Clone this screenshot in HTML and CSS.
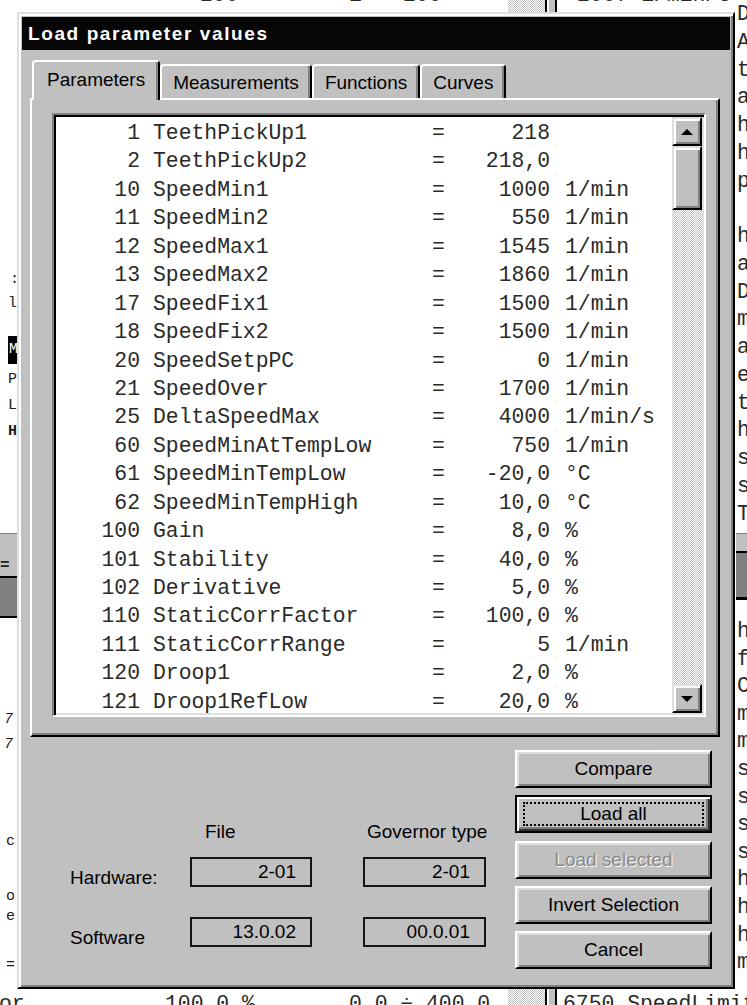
FILE: index.html
```html
<!DOCTYPE html>
<html lang="en">
<head>
<meta charset="utf-8">
<title>Load parameter values</title>
<link rel="stylesheet" href="styles.css">
</head>
<body>
<div class="desk">
  <!-- listing window underneath the dialog -->
  <div class="listing">
    <div class="bg-scroll"></div>
    <div class="bg-split"></div>
    <div class="frag top-a">200</div>
    <div class="frag top-b">1</div>
    <div class="frag top-c">200</div>
    <div class="frag top-d">2007 1/min/s</div>

    <div class="col col-right-upper">
      <div>D</div><div>A</div><div>t</div><div>a</div><div>h</div><div>h</div><div>p</div><div>&nbsp;</div>
      <div>h</div><div>a</div><div>D</div><div>m</div><div>a</div><div>e</div><div>t</div><div>h</div>
      <div>s</div><div>s</div><div>T</div>
    </div>
    <div class="hbar hbar-right"></div>
    <div class="col col-right-lower">
      <div>h</div><div>f</div><div>C</div><div>m</div><div>m</div><div>s</div><div>s</div><div>s</div>
      <div>s</div><div>h</div><div>h</div><div>h</div><div>m</div>
    </div>

    <div class="tiny t1">:</div>
    <div class="tiny t2">ll</div>
    <div class="tiny t3 inv">M</div>
    <div class="tiny t4">P</div>
    <div class="tiny t5">L</div>
    <div class="tiny t6">H</div>
    <div class="hbar hbar-left"><span>=</span></div>
    <div class="tiny t7">7</div>
    <div class="tiny t8">7</div>
    <div class="tiny t9">c</div>
    <div class="tiny t10">o</div>
    <div class="tiny t11">e</div>
    <div class="tiny t12">=</div>

    <div class="frag bot-a">or</div>
    <div class="frag bot-b">100,0 %</div>
    <div class="frag bot-c">0,0 ÷ 400,0</div>
    <div class="frag bot-d">6750 SpeedLimit</div>
  </div>

  <!-- dialog window -->
  <div class="dialog">
    <div class="titlebar">Load parameter values</div>
    <div class="dlg-body">
      <div class="tabs">
        <div class="tab active">Parameters</div>
        <div class="tab">Measurements</div>
        <div class="tab">Functions</div>
        <div class="tab">Curves</div>
      </div>
      <div class="panel">
        <div class="listbox">
          <div class="rows">
            <div class="row"><span class="num">1</span><span class="name">TeethPickUp1</span><span class="eq">=</span><span class="val">218</span><span class="unit"></span></div>
            <div class="row"><span class="num">2</span><span class="name">TeethPickUp2</span><span class="eq">=</span><span class="val">218,0</span><span class="unit"></span></div>
            <div class="row"><span class="num">10</span><span class="name">SpeedMin1</span><span class="eq">=</span><span class="val">1000</span><span class="unit">1/min</span></div>
            <div class="row"><span class="num">11</span><span class="name">SpeedMin2</span><span class="eq">=</span><span class="val">550</span><span class="unit">1/min</span></div>
            <div class="row"><span class="num">12</span><span class="name">SpeedMax1</span><span class="eq">=</span><span class="val">1545</span><span class="unit">1/min</span></div>
            <div class="row"><span class="num">13</span><span class="name">SpeedMax2</span><span class="eq">=</span><span class="val">1860</span><span class="unit">1/min</span></div>
            <div class="row"><span class="num">17</span><span class="name">SpeedFix1</span><span class="eq">=</span><span class="val">1500</span><span class="unit">1/min</span></div>
            <div class="row"><span class="num">18</span><span class="name">SpeedFix2</span><span class="eq">=</span><span class="val">1500</span><span class="unit">1/min</span></div>
            <div class="row"><span class="num">20</span><span class="name">SpeedSetpPC</span><span class="eq">=</span><span class="val">0</span><span class="unit">1/min</span></div>
            <div class="row"><span class="num">21</span><span class="name">SpeedOver</span><span class="eq">=</span><span class="val">1700</span><span class="unit">1/min</span></div>
            <div class="row"><span class="num">25</span><span class="name">DeltaSpeedMax</span><span class="eq">=</span><span class="val">4000</span><span class="unit">1/min/s</span></div>
            <div class="row"><span class="num">60</span><span class="name">SpeedMinAtTempLow</span><span class="eq">=</span><span class="val">750</span><span class="unit">1/min</span></div>
            <div class="row"><span class="num">61</span><span class="name">SpeedMinTempLow</span><span class="eq">=</span><span class="val">-20,0</span><span class="unit">°C</span></div>
            <div class="row"><span class="num">62</span><span class="name">SpeedMinTempHigh</span><span class="eq">=</span><span class="val">10,0</span><span class="unit">°C</span></div>
            <div class="row"><span class="num">100</span><span class="name">Gain</span><span class="eq">=</span><span class="val">8,0</span><span class="unit">%</span></div>
            <div class="row"><span class="num">101</span><span class="name">Stability</span><span class="eq">=</span><span class="val">40,0</span><span class="unit">%</span></div>
            <div class="row"><span class="num">102</span><span class="name">Derivative</span><span class="eq">=</span><span class="val">5,0</span><span class="unit">%</span></div>
            <div class="row"><span class="num">110</span><span class="name">StaticCorrFactor</span><span class="eq">=</span><span class="val">100,0</span><span class="unit">%</span></div>
            <div class="row"><span class="num">111</span><span class="name">StaticCorrRange</span><span class="eq">=</span><span class="val">5</span><span class="unit">1/min</span></div>
            <div class="row"><span class="num">120</span><span class="name">Droop1</span><span class="eq">=</span><span class="val">2,0</span><span class="unit">%</span></div>
            <div class="row"><span class="num">121</span><span class="name">Droop1RefLow</span><span class="eq">=</span><span class="val">20,0</span><span class="unit">%</span></div>
          </div>
          <div class="vscroll">
            <div class="sb-btn"><span class="arrow-up"></span></div>
            <div class="thumb"></div>
            <div class="track"></div>
            <div class="sb-btn"><span class="arrow-down"></span></div>
          </div>
        </div>
      </div>
      <div class="footer">
        <div class="info">
          <div class="info-head">
            <span class="lbl"></span>
            <span class="head head-file">File</span>
            <span class="head head-gov">Governor type</span>
          </div>
          <div class="info-row">
            <span class="lbl">Hardware:</span>
            <span class="field">2-01</span>
            <span class="field">2-01</span>
          </div>
          <div class="info-row second">
            <span class="lbl">Software</span>
            <span class="field">13.0.02</span>
            <span class="field">00.0.01</span>
          </div>
        </div>
        <div class="buttons">
          <div class="btn">Compare</div>
          <div class="btn default"><span class="focus">Load all</span></div>
          <div class="btn disabled">Load selected</div>
          <div class="btn">Invert Selection</div>
          <div class="btn">Cancel</div>
        </div>
      </div>
    </div>
  </div>
</div>
</body>
</html>
```
FILE: styles.css
```css
* { box-sizing: border-box; }

html, body {
  margin: 0;
  padding: 0;
}

body {
  background: #fff;
  font-family: "Liberation Sans", Arial, sans-serif;
  color: #000;
}

.desk {
  position: relative;
  width: 747px;
  height: 1005px;
  overflow: hidden;
  background: #fff;
}

/* ---------- listing window in the background ---------- */
.listing {
  position: absolute;
  inset: 0;
  font-family: "Liberation Mono", "Courier New", monospace;
  font-size: 21.4px;
  color: #2a2a2a;
}

.frag {
  position: absolute;
  white-space: pre;
  line-height: 28px;
}

.top-a { left: 200px; top: -19px; }
.top-b { left: 349px; top: -19px; }
.top-c { left: 403px; top: -19px; }
.top-d { left: 577px; top: -19px; }

.bot-a { left: -1px; top: 990px; }
.bot-b { left: 165px; top: 990px; }
.bot-c { left: 349px; top: 990px; }
.bot-d { left: 563px; top: 990px; }

.bg-scroll {
  position: absolute;
  left: 508px;
  top: 0;
  width: 37px;
  height: 1005px;
  background: repeating-conic-gradient(#fff 0 25%, #c0c0c0 0 50%) 0 0 / 2px 2px;
}

.bg-split {
  position: absolute;
  left: 545px;
  top: 0;
  width: 12px;
  height: 1005px;
  background: #c0c0c0;
  border-left: 2px solid #000;
  border-right: 2px solid #000;
  box-shadow: inset 2px 0 #fff;
}

.col {
  position: absolute;
  display: flex;
  flex-direction: column;
  white-space: nowrap;
}

.col-right-upper { left: 737px; top: 1px; line-height: 27.75px; }
.col-right-lower { left: 737px; top: 618px; line-height: 27.6px; }

.hbar {
  position: absolute;
  background: #c0c0c0;
}

.hbar-right {
  left: 736px;
  top: 533px;
  width: 11px;
  height: 67px;
  border-top: 1px solid #808080;
  border-bottom: 3px solid #000;
  box-shadow: inset 0 -44px #808080, inset 0 -46px #000;
}

.hbar-left {
  left: 0;
  top: 533px;
  width: 17px;
  height: 85px;
  border-top: 1px solid #808080;
  border-bottom: 2px solid #000;
  box-shadow: inset 0 -38px #808080, inset 0 -40px #000;
  font-size: 16px;
  line-height: 16px;
}

.hbar-left span {
  display: block;
  padding: 24px 0 0 0;
  font-weight: bold;
  color: #202020;
}

.tiny {
  position: absolute;
  font-size: 15px;
  line-height: 16px;
  color: #202020;
}

.tiny.inv {
  background: #000;
  color: #fff;
  padding: 0 1px;
}

.t1 { left: 10px; top: 272px; }
.t2 { left: 8px; top: 296px; }
.t3 { left: 8px; top: 336px; height: 28px; line-height: 28px; }
.t4 { left: 8px; top: 372px; }
.t5 { left: 8px; top: 398px; }
.t6 { left: 8px; top: 424px; font-weight: bold; }
.t7 { left: 4px; top: 712px; font-style: italic; }
.t8 { left: 4px; top: 737px; font-style: italic; }
.t9 { left: 6px; top: 834px; }
.t10 { left: 6px; top: 889px; }
.t11 { left: 6px; top: 909px; }
.t12 { left: 6px; top: 958px; }

/* ---------- dialog window ---------- */
.dialog {
  position: absolute;
  left: 17px;
  top: 12px;
  width: 718px;
  height: 977px;
  background: #c0c0c0;
  border: 2px solid;
  border-color: #dfdfdf #000 #000 #dfdfdf;
  box-shadow: inset 2px 2px #fff, inset -2px -2px #808080;
  padding: 3px;
  display: flex;
  flex-direction: column;
}

.titlebar {
  height: 33px;
  flex: none;
  background: #060606;
  color: #fff;
  font-weight: bold;
  font-size: 19px;
  letter-spacing: 1.6px;
  padding-left: 6px;
  display: flex;
  align-items: center;
}

.dlg-body {
  flex: 1;
  display: flex;
  flex-direction: column;
}

/* tab strip */
.tabs {
  height: 48px;
  flex: none;
  display: flex;
  align-items: flex-end;
  margin-left: 10px;
  position: relative;
  z-index: 1;
}

.tab {
  height: 34px;
  padding: 5px 11px 0;
  border: 2px solid;
  border-color: #fff #000 transparent #fff;
  border-bottom: none;
  border-radius: 4px 4px 0 0;
  box-shadow: inset -2px 0 #808080;
  background: #c0c0c0;
  font-size: 19px;
  line-height: 24px;
  white-space: nowrap;
}

.tab.active {
  height: 40px;
  margin-bottom: -2px;
  padding: 6px 13px 0;
}

/* tab page */
.panel {
  height: 639px;
  flex: none;
  margin-left: 8px;
  margin-right: 10px;
  border: 2px solid;
  border-color: #fff #000 #000 #fff;
  box-shadow: inset -2px -2px #808080;
  padding: 13px 12px 18px 20px;
}

.listbox {
  height: 100%;
  display: flex;
  background: #fff;
  border: 2px solid;
  border-color: #808080 #fff #fff #808080;
  box-shadow: inset 2px 2px #000, inset -2px -2px #dfdfdf;
  padding: 2px;
}

.rows {
  flex: 1;
  overflow: hidden;
  padding-top: 2px;
  font-family: "Liberation Mono", "Courier New", monospace;
  font-size: 21.4px;
  line-height: 28.45px;
  color: #2a2a2a;
}

.row {
  display: grid;
  grid-template-columns: 84px 292px 13px 105px auto;
  height: 28.45px;
  white-space: nowrap;
}

.num { text-align: right; }
.name { padding-left: 13px; }
.eq { text-align: center; }
.val { text-align: right; }
.unit { padding-left: 15px; }

/* vertical scroll bar */
.vscroll {
  width: 30px;
  flex: none;
  display: flex;
  flex-direction: column;
  background: repeating-conic-gradient(#fff 0 25%, #c0c0c0 0 50%) 0 0 / 2px 2px;
}

.sb-btn,
.thumb {
  background: #c0c0c0;
  border: 2px solid;
  border-color: #dfdfdf #000 #000 #dfdfdf;
  box-shadow: inset 2px 2px #fff, inset -2px -2px #808080;
}

.sb-btn {
  height: 29px;
  flex: none;
  display: flex;
  align-items: center;
  justify-content: center;
}

.thumb {
  height: 64px;
  flex: none;
}

.track { flex: 1; }

.arrow-up,
.arrow-down {
  width: 0;
  height: 0;
  border-left: 6px solid transparent;
  border-right: 6px solid transparent;
}

.arrow-up { border-bottom: 6px solid #000; }
.arrow-down { border-top: 6px solid #000; }

/* lower part: version info and command buttons */
.footer {
  flex: 1;
  display: flex;
}

.info {
  flex: 1;
  display: flex;
  flex-direction: column;
  padding: 83px 0 0 48px;
  font-size: 19px;
}

.info-head,
.info-row {
  display: flex;
}

.info-head {
  height: 24px;
  margin-bottom: 13px;
  line-height: 24px;
}

.info-row { height: 30px; }
.info-row.second { margin-top: 30px; }

.lbl {
  width: 120px;
  height: 30px;
  flex: none;
  line-height: 24px;
  padding-top: 9px;
  white-space: nowrap;
}

.info-head .lbl { height: 24px; padding-top: 0; }

.head {
  flex: none;
  white-space: nowrap;
}

.head-file { width: 173px; padding-left: 15px; }
.head-gov { width: 123px; padding-left: 4px; }

.field {
  width: 122px;
  flex: none;
  height: 30px;
  border: 2px solid #141414;
  text-align: right;
  padding-right: 14px;
  line-height: 25px;
  white-space: nowrap;
}

.field + .field {
  width: 123px;
  margin-left: 51px;
}

.buttons {
  width: 197px;
  flex: none;
  margin: 13px 18px 0 0;
  display: flex;
  flex-direction: column;
  gap: 7.3px;
}

.btn {
  height: 38px;
  flex: none;
  background: #c0c0c0;
  border: 2px solid;
  border-color: #fff #000 #000 #fff;
  box-shadow: inset 2px 2px #dfdfdf, inset -2px -2px #808080;
  font-size: 19px;
  display: flex;
  align-items: center;
  justify-content: center;
  white-space: nowrap;
}

.btn.default {
  border: 2px solid #000;
  box-shadow: inset 2px 2px #fff, inset -2px -2px #303030, inset -4px -4px #808080;
  padding: 5px 6px 5px 6px;
}

.btn.default .focus {
  flex: 1;
  align-self: stretch;
  border: 2px dotted #000;
  display: flex;
  align-items: center;
  justify-content: center;
}

.btn.disabled {
  color: #8a8a8a;
  text-shadow: 1px 1px #fff;
}
```
